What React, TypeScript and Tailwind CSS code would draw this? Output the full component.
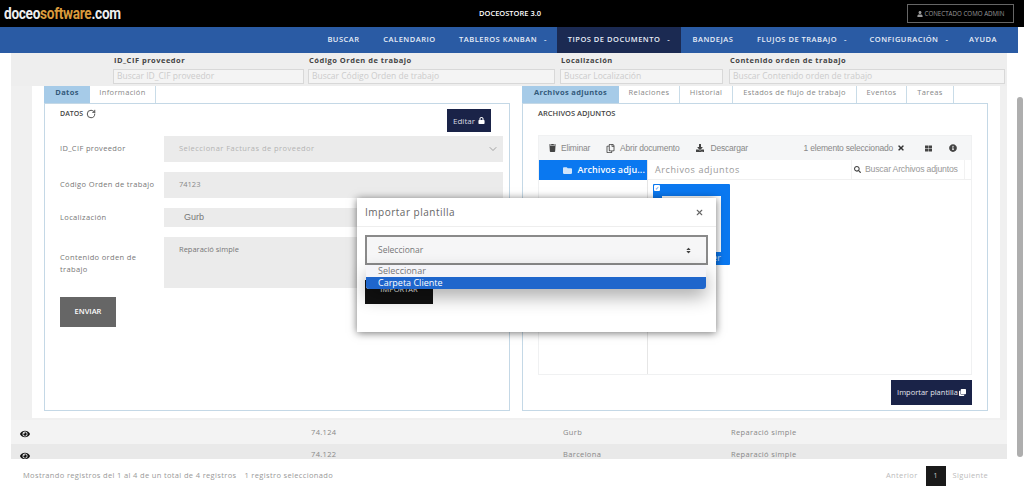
import { ChevronDown, RotateCw, X } from "lucide-react";
import {
  FaClone,
  FaDownload,
  FaEye,
  FaFolder,
  FaInfoCircle,
  FaLock,
  FaRegCopy,
  FaSearch,
  FaSort,
  FaThLarge,
  FaTimes,
  FaTrash,
  FaUser,
} from "react-icons/fa";

const NAV_ITEMS = [
  { label: "BUSCAR", w: "w-[63px]" },
  { label: "CALENDARIO", w: "w-[69px]" },
  { label: "TABLEROS KANBAN", caret: true, w: "ml-[5px] w-[108px]" },
  { label: "TIPOS DE DOCUMENTO", caret: true, active: true, w: "w-[124px]" },
  { label: "BANDEJAS", w: "w-[64px]" },
  { label: "FLUJOS DE TRABAJO", caret: true, w: "w-[114px]" },
  { label: "CONFIGURACIÓN", caret: true, w: "w-[100px]" },
  { label: "AYUDA", w: "w-[48px]" },
];

const FILTERS = [
  { label: "ID_CIF proveedor", placeholder: "Buscar ID_CIF proveedor", w: "w-[191px]" },
  { label: "Código Orden de trabajo", placeholder: "Buscar Código Orden de trabajo", w: "ml-[4px] w-[247px]" },
  { label: "Localización", placeholder: "Buscar Localización", w: "ml-[5px] w-[163px]" },
  { label: "Contenido orden de trabajo", placeholder: "Buscar Contenido orden de trabajo", w: "ml-[6px] w-[276px]" },
];

const RIGHT_TABS = [
  { label: "Relaciones", w: "w-[61px]" },
  { label: "Historial", w: "w-[53px]" },
  { label: "Estados de flujo de trabajo", w: "w-[124px]" },
  { label: "Eventos", w: "w-[50px]" },
  { label: "Tareas", w: "w-[47px]" },
];

const App = () => {
  return (
    <div className="relative flex h-[490px] w-[1024px] flex-col overflow-hidden bg-white font-['Open_Sans',sans-serif] text-[#555]">
      {/* Top bar */}
      <header className="flex h-[27px] shrink-0 items-center bg-black pl-[4px] pr-[10px]">
        <div className="w-[475px]">
          <div className="origin-left scale-x-[0.8] whitespace-nowrap font-['Roboto',sans-serif] text-[17px] font-bold tracking-[-0.35px] text-[#eee]">
            doceo<span className="text-[#d99a3c]">software</span>.com
          </div>
        </div>
        <div className="flex-1 text-[7.5px] font-semibold text-white">DOCEOSTORE 3.0</div>
        <div className="flex h-[19px] w-[107px] items-center justify-center gap-[2px] border border-[#666] text-[6.2px] text-[#999]">
          <FaUser className="h-[6px] w-[6px]" />
          CONECTADO COMO ADMIN
        </div>
      </header>

      {/* Main nav */}
      <nav className="flex h-[26px] w-[1018px] shrink-0 items-stretch justify-end bg-[#2a5ba4] pr-[11px]">
        {NAV_ITEMS.map((item) => (
          <div
            key={item.label}
            className={`flex items-center justify-center whitespace-nowrap text-[7.5px] font-semibold tracking-[0.5px] text-[#e8eef8] ${item.w} ${item.active ? "bg-[#1b2a52]" : ""}`}
          >
            {item.label}
            {item.caret && <span className="ml-[7px]">-</span>}
          </div>
        ))}
      </nav>

      <div className="flex min-h-0 flex-1">
        <div className="ml-[11px] flex w-[996px] flex-col">
          {/* Column filters */}
          <div className="flex h-[33px] shrink-0 bg-[#eeeeee] pl-[102px]">
            {FILTERS.map((f) => (
              <div key={f.label} className={`${f.w} shrink-0`}>
                <div className="h-[16px] pl-[1px] pt-[1px] text-[7.5px] font-bold leading-[12px] tracking-[0.5px] text-[#444]">
                  {f.label}
                </div>
                <div className="flex h-[15px] items-center whitespace-nowrap border border-[#d8d8d8] bg-[#f4f4f4] px-[3px] text-[8.5px] text-[#cccccc]">
                  {f.placeholder}
                </div>
              </div>
            ))}
          </div>

          {/* Expanded row */}
          <div className="flex h-[334px] shrink-0 bg-[#f0f0f0] pl-[21px] pr-[7px]">
            <div className="flex h-[332px] flex-1 gap-[12px] bg-white px-[12px]">
              {/* Left column */}
              <section className="flex w-[466px] flex-col">
                <div className="flex h-[17px] shrink-0 text-[7.5px] leading-[12px] tracking-[0.35px]">
                  <div className="flex w-[46px] justify-center bg-[#a6cbe8] font-bold text-[#33597a]">Datos</div>
                  <div className="flex w-[66px] justify-center border-r border-[#c9dce8] text-[#888]">Información</div>
                </div>
                <div className="flex h-[308px] flex-col border border-[#c4d8e6] pl-[15px] pr-[6px] pt-[5px]">
                  <div className="flex h-[26px] items-start justify-between pr-[12px]">
                    <div className="flex items-center gap-[3px] text-[7px] font-semibold text-[#444]">
                      DATOS
                      <RotateCw className="h-[10px] w-[10px] text-[#333]" strokeWidth={2} />
                    </div>
                    <div className="flex h-[23px] w-[44px] items-center justify-center gap-[3px] bg-[#1a2348] text-[8px] text-[#d8d8e0]">
                      Editar
                      <FaLock className="h-[7px] w-[7px] text-white" />
                    </div>
                  </div>

                  <div className="mt-[1px] flex h-[26px] items-center">
                    <div className="w-[104px] shrink-0 text-[7.5px] tracking-[0.35px] text-[#777]">ID_CIF proveedor</div>
                    <div className="flex h-full w-[339px] shrink-0 items-center justify-between bg-[#ebebeb] pl-[15px] pr-[4px] text-[7.5px] tracking-[0.45px] text-[#b4b4b4]">
                      Seleccionar Facturas de proveedor
                      <ChevronDown className="h-[12px] w-[12px] text-[#888]" strokeWidth={1.5} />
                    </div>
                  </div>
                  <div className="mt-[10px] flex h-[26px] items-center">
                    <div className="w-[104px] shrink-0 whitespace-nowrap text-[7.5px] tracking-[0.35px] text-[#777]">Código Orden de trabajo</div>
                    <div className="flex h-full w-[339px] shrink-0 items-center bg-[#ebebeb] pl-[15px] text-[7.5px] text-[#888]">74123</div>
                  </div>
                  <div className="mt-[10px] flex h-[19px] items-center">
                    <div className="w-[104px] shrink-0 text-[7.5px] tracking-[0.35px] text-[#777]">Localización</div>
                    <div className="flex h-full w-[339px] shrink-0 items-center bg-[#ebebeb] pl-[20px] font-['Liberation_Sans',sans-serif] text-[9px] text-[#777]">Gurb</div>
                  </div>
                  <div className="mt-[10px] flex h-[51px] items-center">
                    <div className="w-[104px] shrink-0 pr-[20px] text-[7.5px] leading-[12px] tracking-[0.35px] text-[#777]">Contenido orden de trabajo</div>
                    <div className="h-full w-[339px] shrink-0 bg-[#ebebeb] pl-[15px] pt-[7px] text-[7.5px] text-[#777]">Reparació simple</div>
                  </div>
                  <div className="mt-[9px] flex h-[30px] w-[56px] items-center justify-center bg-[#666] text-[7.5px] font-semibold text-white">ENVIAR</div>
                </div>
              </section>

              {/* Right column */}
              <section className="flex w-[466px] flex-col">
                <div className="flex h-[17px] shrink-0 text-[7.5px] leading-[12px] tracking-[0.35px] text-[#888]">
                  <div className="flex w-[97px] justify-center whitespace-nowrap bg-[#a6cbe8] font-bold text-[#33597a]">Archivos adjuntos</div>
                  {RIGHT_TABS.map((t) => (
                    <div key={t.label} className={`flex justify-center whitespace-nowrap border-r border-[#c9dce8] ${t.w}`}>
                      {t.label}
                    </div>
                  ))}
                </div>
                <div className="flex h-[308px] flex-col border border-[#c4d8e6] px-[15px]">
                  <div className="h-[31px] pt-[4px] text-[7.5px] font-semibold text-[#444]">ARCHIVOS ADJUNTOS</div>

                  {/* File manager */}
                  <div className="flex h-[240px] flex-col border border-[#f0f1f2] font-['Liberation_Sans',sans-serif]">
                    <div className="flex h-[24px] shrink-0 items-center bg-[#f5f6f7] pl-[10px] pr-[14px] text-[8.5px] tracking-[-0.2px] text-[#888]">
                      <FaTrash className="mr-[5px] h-[8px] w-[7px] text-[#444]" />
                      Eliminar
                      <FaRegCopy className="ml-[16px] mr-[5px] h-[9px] w-[9px] text-[#444]" />
                      Abrir documento
                      <FaDownload className="ml-[17px] mr-[6px] h-[8px] w-[8px] text-[#444]" />
                      Descargar
                      <span className="ml-auto">1 elemento seleccionado</span>
                      <FaTimes className="ml-[4px] h-[8px] w-[8px] text-[#333]" />
                      <FaThLarge className="ml-[20px] h-[7px] w-[7px] text-[#444]" />
                      <FaInfoCircle className="ml-[17px] h-[8px] w-[8px] text-[#444]" />
                    </div>
                    <div className="flex min-h-0 flex-1">
                      <div className="w-[109px] shrink-0 border-r border-[#e6e6e6]">
                        <div className="flex h-[20px] items-center justify-end gap-[4px] bg-[#0a78f0] pr-[2px] font-['Open_Sans',sans-serif] text-[9px] font-semibold tracking-[0.1px] text-white">
                          <FaFolder className="h-[9px] w-[11px] text-[#cfe4fb]" />
                          Archivos adju...
                        </div>
                      </div>
                      <div className="min-w-0 flex-1">
                        <div className="flex h-[20px] items-center justify-between border-b border-[#f0f0f0] pl-[7px] pr-[6px]">
                          <span className="font-['Open_Sans',sans-serif] text-[9px] tracking-[0.6px] text-[#999]">Archivos adjuntos</span>
                          <div className="flex h-full w-[114px] items-center gap-[4px] border-x border-[#f2f2f2] pl-[2px] text-[8.7px] tracking-[-0.2px] text-[#999]">
                            <FaSearch className="h-[7px] w-[7px] text-[#444]" />
                            Buscar Archivos adjuntos
                          </div>
                        </div>
                        {/* Selected file tile */}
                        <div className="relative ml-[5px] mt-[4px] h-[81px] w-[77px] rounded-[1px] bg-[#0a78f0] px-[9px] pt-[12px] font-['Open_Sans',sans-serif]">
                          <div className="absolute left-[1px] top-[1px] flex h-[6px] w-[6px] items-center justify-center rounded-[1px] bg-white text-[5px] leading-none text-[#0a78f0]">✓</div>
                          <div className="h-[56px] bg-white" />
                          <div className="pr-0 text-right text-[9px] leading-[12px] text-[#cfe4fb]">er</div>
                        </div>
                      </div>
                    </div>
                  </div>

                  <div className="mt-[5px] flex justify-end">
                    <div className="flex h-[25px] w-[81px] items-center justify-center gap-[1px] bg-[#1a2348] text-[7.5px] text-[#e4e4ec]">
                      Importar plantilla
                      <FaClone className="h-[7px] w-[7px] text-white" />
                    </div>
                  </div>
                </div>
              </section>
            </div>
          </div>

          {/* Result rows */}
          <div className="flex h-[24px] shrink-0 items-center bg-[#f3f3f3] pt-[1px] text-[7.5px] tracking-[0.35px] text-[#888]">
            <FaEye className="ml-[9px] mt-[2px] h-[10px] w-[10px] shrink-0 text-[#111]" />
            <span className="ml-[281px] w-[252px]">74.124</span>
            <span className="w-[168px]">Gurb</span>
            <span>Reparació simple</span>
          </div>
          <div className="flex h-[15px] shrink-0 items-start overflow-hidden bg-[#e9e9e9] text-[7.5px] leading-[20px] tracking-[0.35px] text-[#888]">
            <FaEye className="ml-[9px] mt-[7px] h-[10px] w-[10px] shrink-0 text-[#111]" />
            <span className="ml-[281px] w-[252px]">74.122</span>
            <span className="w-[168px]">Barcelona</span>
            <span>Reparació simple</span>
          </div>

          {/* Footer */}
          <div className="flex flex-1 items-center pl-[12px] pr-[19px] pt-[3px] text-[7.5px] tracking-[0.35px] text-[#999]">
            <span>Mostrando registros del 1 al 4 de un total de 4 registros</span>
            <span className="ml-[8px]">1 registro seleccionado</span>
            <span className="ml-auto text-[#bbb]">Anterior</span>
            <span className="ml-[8px] mr-[7px] flex h-[20px] w-[20px] items-center justify-center bg-[#1a1a1a] text-[7px] text-[#ccc]">1</span>
            <span className="text-[#bbb]">Siguiente</span>
          </div>
        </div>

        {/* Page scrollbar */}
        <div className="ml-[10px] w-[7px] pt-[44px]">
          <div className="h-[360px] w-[6px] rounded-[3px] bg-[#aeaeae]" />
        </div>
      </div>

      {/* Import dialog */}
      <div className="absolute left-[357px] top-[198px] h-[134px] w-[359px] bg-white shadow-[0_1px_8px_rgba(0,0,0,0.55)]">
        <div className="flex h-[29px] items-center justify-between border-b border-[#eeeeee] pl-[8px] pr-[12px] text-[10px] tracking-[0.5px] text-[#666]">
          Importar plantilla
          <X className="h-[9px] w-[9px] text-[#666]" strokeWidth={3} />
        </div>
        <div className="mx-[8px] mt-[8px] flex h-[30px] w-[343px] items-center justify-between border-2 border-[#8a8a8a] bg-[#f6f6f7] pl-[11px] pr-[14px] text-[8.5px] text-[#777]">
          Seleccionar
          <FaSort className="h-[7px] w-[7px] text-[#444]" />
        </div>
        <div className="ml-[8px] mt-[15px] flex h-[24px] w-[68px] items-end justify-center bg-[#111] pb-[10px] text-[7.5px] leading-[10px] text-white">IMPORTAR</div>

        {/* Open select list */}
        <div className="absolute left-[9px] top-[67px] w-[340px] overflow-hidden rounded-[3px] bg-[#f4f4f8] text-[9px] leading-[12px] shadow-[0_8px_18px_rgba(0,0,0,0.32)]">
          <div className="pl-[12px] text-[#777]">Seleccionar</div>
          <div className="bg-[#1f66cc] pl-[12px] text-white">Carpeta Cliente</div>
        </div>
      </div>
    </div>
  );
};

export default App;
